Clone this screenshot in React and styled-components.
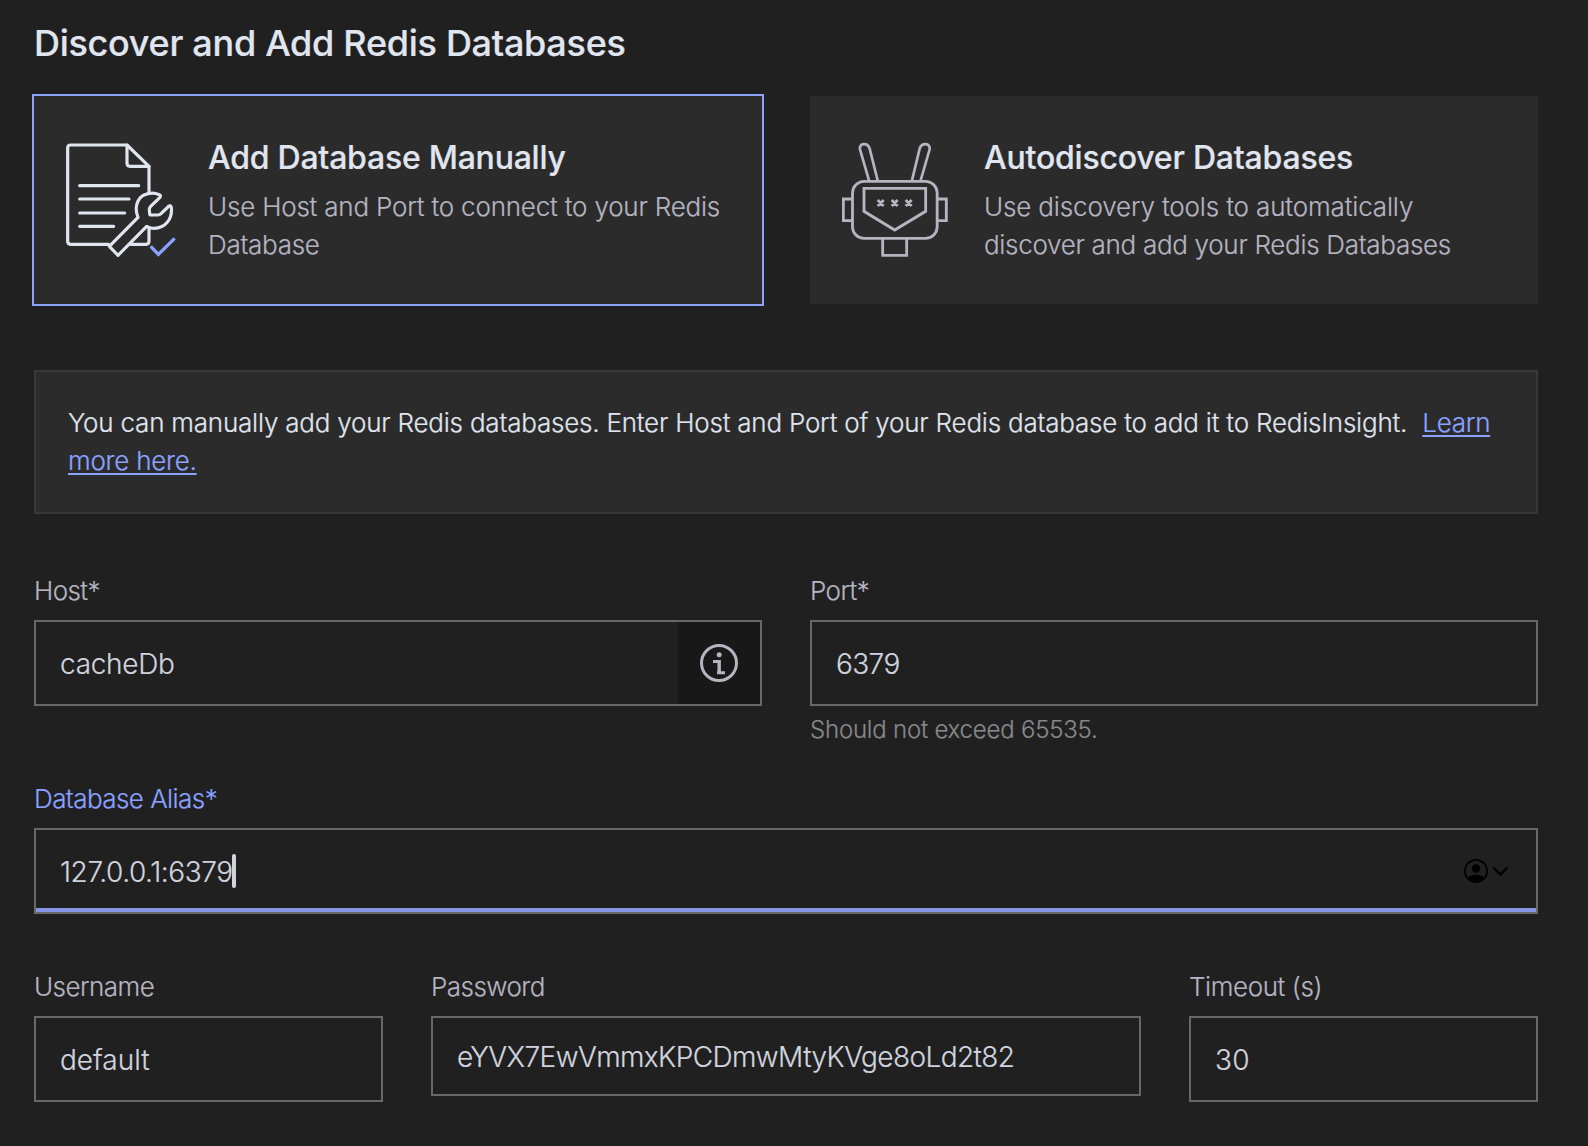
import React from 'react';
import styled, { createGlobalStyle } from 'styled-components';

const color = {
  page: '#202020',
  panel: '#2b2b2b',
  panelBorder: '#383838',
  border: '#686868',
  append: '#181818',
  title: '#e0e5ef',
  value: '#d0d4df',
  muted: '#b5b4c0',
  help: '#88888c',
  accent: '#8ba2ff',
  focusBar: '#8695e6',
};

const GlobalStyle = createGlobalStyle`
  *, *::before, *::after { box-sizing: border-box; }
  body {
    margin: 0;
    background: ${color.page};
    font-family: Inter, "Liberation Sans", sans-serif;
    font-weight: 300;
    -webkit-text-stroke-width: 0.2px;
  }
`;

const Page = styled.main`
  min-height: 1146px;
  padding: 23px 50px 0 34px;
  background: ${color.page};
`;

const Title = styled.h1`
  margin: 0 0 33px;
  font-size: 36px;
  line-height: 40px;
  font-weight: 500;
  letter-spacing: -0.288px;
  color: ${color.title};
`;

const Cards = styled.div`
  display: grid;
  grid-template-columns: 1fr 1fr;
  gap: 48px;
`;

const Card = styled.button`
  display: flex;
  align-items: center;
  gap: 31px;
  height: 208px;
  padding: 0 32px;
  border: 0;
  background: ${color.panel};
  outline: ${(p) => (p.$selected ? `2px solid ${color.accent}` : 'none')};
  font: inherit;
  text-align: left;
`;

const CardIcon = styled.svg`
  flex: none;
  width: 111px;
  height: 116px;
  fill: none;
  stroke: ${(p) => p.$tone};
  stroke-width: ${(p) => p.$weight};
`;

const CardBody = styled.div`
  display: flex;
  flex-direction: column;
  flex: 1;
  padding-top: 3px;
`;

const CardHeading = styled.span`
  margin-bottom: 11px;
  font-size: 32px;
  line-height: 38px;
  font-weight: 500;
  letter-spacing: ${(p) => p.$tracking};
  color: ${color.title};
`;

const CardText = styled.span`
  font-size: 26px;
  line-height: 38px;
  letter-spacing: ${(p) => p.$tracking};
  color: ${color.muted};
  white-space: nowrap;
`;

const Banner = styled.p`
  margin: 66px 0 58px;
  padding: 32px;
  border: 2px solid ${color.panelBorder};
  background: ${color.panel};
  font-size: 26px;
  line-height: 38px;
  letter-spacing: -0.215px;
  color: ${color.title};
`;

const Link = styled.a`
  margin-left: 8px;
  color: ${color.accent};
  letter-spacing: -0.25px;
  text-decoration: underline;
  text-decoration-thickness: 2px;
  text-underline-offset: 3px;
  text-decoration-skip-ink: none;
`;

const Row = styled.div`
  display: grid;
  grid-template-columns: ${(p) => p.$columns};
  gap: 48px;
  margin-bottom: ${(p) => p.$after};
`;

const Field = styled.div`
  display: flex;
  flex-direction: column;
`;

const Label = styled.label`
  margin-bottom: 10px;
  font-size: 26px;
  line-height: 38px;
  letter-spacing: ${(p) => p.$tracking || '-0.55px'};
  color: ${(p) => (p.$active ? color.accent : color.muted)};
`;

const Control = styled.div`
  display: flex;
  align-items: center;
  height: ${(p) => (p.$compact ? '80px' : '86px')};
  padding: 2px 0 0 24px;
  border: 2px solid ${color.border};
  box-shadow: ${(p) => (p.$focused ? `inset 0 -4px 0 ${color.focusBar}` : 'none')};
`;

const Value = styled.span`
  font-size: 28px;
  line-height: 38px;
  letter-spacing: ${(p) => p.$tracking};
  color: ${color.value};
  white-space: nowrap;
`;

const Caret = styled.span`
  width: 4px;
  height: 34px;
  margin: -2px 0 0 -1px;
  border-radius: 2px;
  background: ${color.value};
`;

const Append = styled.span`
  display: flex;
  align-items: center;
  justify-content: center;
  width: 82px;
  height: 82px;
  margin: -2px 0 0 auto;
  background: ${color.append};
`;

const InfoSvg = styled.svg`
  width: 38px;
  height: 38px;
  fill: none;
  stroke: ${color.muted};
  stroke-width: 9;
`;

const AutofillSvg = styled.svg`
  width: 44px;
  height: 24px;
  margin: -2px 28px 0 auto;
  fill: none;
  stroke: #000;
`;

const Help = styled.span`
  margin-top: 6px;
  font-size: 24px;
  line-height: 36px;
  letter-spacing: -0.21px;
  color: ${color.help};
`;

const ManualIcon = () => (
  <CardIcon viewBox="18 18 333 348" $tone={color.title} $weight={9.5} strokeLinecap="round" strokeLinejoin="round">
    <path d="M146 325H32q-9 0-9-9V36q0-9 9-9H201L267 91V172" />
    <path d="M201 27V82q0 9 9 9H267" />
    <path d="M267 275V316q0 9-9 9H212" />
    <path d="M59 149H236M59 189H207M59 231H194M59 271H161" />
    <path d="M234 244L148 331L174 358L260 271C268 275 275 277 282 277C315 277 338 250 334 214Q332 207 327 210L303 233Q299 237 294 237H273Q269 237 269 233L268 223Q267 216 272 211L300 184Q304 179 298 176C286 171 268 170 252 177C232 187 222 215 234 244Z" />
    <path d="M272 331L295 355L344 307" stroke={color.accent} strokeWidth="10" strokeLinecap="butt" strokeLinejoin="miter" />
  </CardIcon>
);

const DiscoverIcon = () => (
  <CardIcon viewBox="126 186 333 348" $tone={color.muted} $weight={8.5}>
    <path strokeWidth="8" d="M207 301L180 208C176 189 203 186 209 206L233 301" />
    <path strokeWidth="8" d="M362 301L389 208C392 189 365 186 359 206L336 301" />
    <rect x="157.500" y="304" width="254" height="171" rx="35" />
    <path d="M157 357H130V422H157M411 357H439V422H411" />
    <path d="M192 325H377V394L284 450L192 394Z" />
    <path d="M233 360l18 18m0-18l-18 18M275 360l18 18m0-18l-18 18M317 360l18 18m0-18l-18 18" />
    <path d="M248 477V526H320V477" />
  </CardIcon>
);

const InfoIcon = () => (
  <InfoSvg viewBox="180 252 114 114">
    <circle cx="237" cy="309" r="52.500" />
    <circle cx="237.500" cy="284" r="7.500" fill={color.muted} stroke="none" />
    <path d="M219 304.500H237.500V338M231 338H255" />
    <path d="M237.500 300V342" />
  </InfoSvg>
);

const AutofillIcon = () => (
  <AutofillSvg viewBox="252 177 132 72">
    <circle cx="288" cy="213" r="33.500" strokeWidth="5" />
    <circle cx="288" cy="205.500" r="12.500" fill="#000" stroke="none" />
    <path d="M261 235C272 221 304 221 315 235A35 35 0 0 1 261 235Z" fill="#000" stroke="none" />
    <path d="M342 204L361.500 224L381 204" strokeWidth="7" strokeLinecap="round" strokeLinejoin="round" />
  </AutofillSvg>
);

export default function App() {
  return (
    <>
      <GlobalStyle />
      <Page>
        <Title>Discover and Add Redis Databases</Title>
        <Cards>
          <Card $selected>
            <ManualIcon />
            <CardBody>
              <CardHeading $tracking="-0.24px">Add Database Manually</CardHeading>
              <CardText $tracking="-0.2px">Use Host and Port to connect to your Redis</CardText>
              <CardText $tracking="-0.28px">Database</CardText>
            </CardBody>
          </Card>
          <Card>
            <DiscoverIcon />
            <CardBody>
              <CardHeading $tracking="-0.208px">Autodiscover Databases</CardHeading>
              <CardText $tracking="-0.15px">Use discovery tools to automatically</CardText>
              <CardText $tracking="-0.3px">discover and add your Redis Databases</CardText>
            </CardBody>
          </Card>
        </Cards>

        <Banner>
          You can manually add your Redis databases. Enter Host and Port of your Redis database to add it to
          RedisInsight. <Link>Learn more here.</Link>
        </Banner>

        <Row $columns="1fr 1fr" $after="32px">
          <Field>
            <Label $tracking="-0.6px">Host*</Label>
            <Control>
              <Value $tracking="-0.3px">cacheDb</Value>
              <Append>
                <InfoIcon />
              </Append>
            </Control>
          </Field>
          <Field>
            <Label $tracking="-0.6px">Port*</Label>
            <Control>
              <Value $tracking="-0.6px">6379</Value>
            </Control>
            <Help>Should not exceed 65535.</Help>
          </Field>
        </Row>

        <Row $columns="1fr" $after="54px">
          <Field>
            <Label $active $tracking="-0.56px">Database Alias*</Label>
            <Control $focused>
              <Value $tracking="-0.4px">127.0.0.1:6379</Value>
              <Caret />
              <AutofillIcon />
            </Control>
          </Field>
        </Row>

        <Row $columns="349px 1fr 349px" $after="0">
          <Field>
            <Label>Username</Label>
            <Control>
              <Value $tracking="0">default</Value>
            </Control>
          </Field>
          <Field>
            <Label>Password</Label>
            <Control $compact>
              <Value $tracking="-0.59px">eYVX7EwVmmxKPCDmwMtyKVge8oLd2t82</Value>
            </Control>
          </Field>
          <Field>
            <Label $tracking="-0.42px">Timeout (s)</Label>
            <Control>
              <Value $tracking="0.3px">30</Value>
            </Control>
          </Field>
        </Row>
      </Page>
    </>
  );
}
